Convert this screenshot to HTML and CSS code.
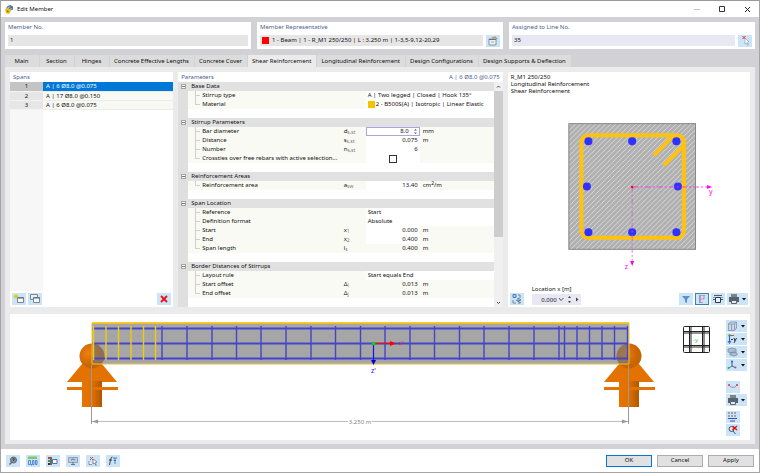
FILE: index.html
```html
<!DOCTYPE html>
<html lang="en">
<head>
    <meta charset="UTF-8">
    <meta name="viewport" content="width=device-width, initial-scale=1.0">
    <title>Edit Member</title>
    <link rel="stylesheet" href="styles.css">
</head>
<body>
    <header class="titlebar">
        <svg class="app-icon" viewBox="0 0 10 10"><path d="M1 4 3 1 6 0 9 2 9 5 6 6 4 4Z" fill="#526e8c"/><path d="M3 3 6 2M5 5 8 4" stroke="#b8d0e4"/><path d="M0 5 3 3 6 5 6 8 4 10 1 9Z" fill="#e8bd18"/><circle cx="3" cy="7" r="1" fill="#8a6b00"/></svg>
        <h1>Edit Member</h1>
        <div class="window-btns">
            <button aria-label="Minimize" disabled><svg viewBox="0 0 7 7"><path d="M0 3.5H6" stroke="#c4c4c4"/></svg></button>
            <button aria-label="Maximize"><svg viewBox="0 0 7 7"><path d="M.5.5H5.5V5.5H.5Z" fill="none" stroke="#333"/></svg></button>
            <button aria-label="Close"><svg viewBox="0 0 7 7"><path d="M1 1 6 6M6 1 1 6" stroke="#222"/></svg></button>
        </div>
    </header>

    <main class="dialog">
        <section class="head-fields">
            <div class="field-box">
                <label for="member-no">Member No.</label>
                <div class="field-row"><input id="member-no" value="1" readonly></div>
            </div>
            <div class="field-box">
                <label for="representative">Member Representative</label>
                <div class="field-row">
                    <div class="input-wrap"><i class="swatch red"></i><input id="representative" value="1 - Beam | 1 - R_M1 250/250 | L : 3.250 m | 1-3,5-9,12-20,29" readonly></div>
                    <button class="tool" aria-label="Edit representative"><svg viewBox="0 0 14 12"><path d="M3 4H10V10H3Z" fill="#eef2f5" stroke="#8994a0"/><path d="M3 4.500H10" stroke="#69747f"/><path d="M6 3 9 2 11 4" fill="none" stroke="#bd956c" stroke-width="1.5"/><path d="M5 7H8" stroke="#8994a0" stroke-width=".8"/></svg></button>
                </div>
            </div>
            <div class="field-box">
                <label for="line-no">Assigned to Line No.</label>
                <div class="field-row">
                    <input id="line-no" class="editable" value="35">
                    <button class="tool" aria-label="Select line"><svg viewBox="0 0 14 12"><path d="M4.500 1 7.500 4M7.500 1 4.500 4" stroke="#e83030"/><path d="M7 3V9L8.500 8 10 10.500 10.500 10 9.500 7.500 11 7Z" fill="#fff" stroke="#8a939b" stroke-width=".6"/></svg></button>
                </div>
            </div>
        </section>

        <nav class="tabs">
            <button>Main</button>
            <button>Section</button>
            <button>Hinges</button>
            <button>Concrete Effective Lengths</button>
            <button>Concrete Cover</button>
            <button class="active">Shear Reinforcement</button>
            <button>Longitudinal Reinforcement</button>
            <button>Design Configurations</button>
            <button>Design Supports &amp; Deflection</button>
        </nav>

        <div class="page">
            <div class="columns">
                <section class="panel spans">
                    <h2>Spans</h2>
                    <table class="span-list">
                        <tr class="selected"><th>1</th><td>A | 6 Ø8.0 @0.075</td></tr>
                        <tr><th>2</th><td>A | 17 Ø8.0 @0.150</td></tr>
                        <tr><th>3</th><td>A | 6 Ø8.0 @0.075</td></tr>
                    </table>
                    <div class="span-empty"></div>
                    <div class="toolbar">
                        <button class="tool" aria-label="New span"><svg viewBox="0 0 14 12"><path d="M5.500 4.500H11.500V9.500H5.500Z" fill="#f6f8fa" stroke="#7b8792"/><path d="M5 5H12" stroke="#5c6873"/><path d="M4 1V6M1.500 3.500H6.500M2 2 6 5M6 2 2 5" stroke="#d8c800" stroke-width=".8"/></svg></button>
                        <button class="tool" aria-label="Copy span"><svg viewBox="0 0 14 12"><path d="M2.500 1.500H9.500V6.500H2.500Z" fill="#e8eef3" stroke="#7b8792"/><path d="M5.500 4.500H11.500V9.500H5.500Z" fill="#f6f8fa" stroke="#7b8792"/><path d="M5 5H12" stroke="#5c6873"/></svg></button>
                        <span class="spacer"></span>
                        <button class="tool" aria-label="Delete span"><svg viewBox="0 0 14 12"><path d="M4 3 10 9M10 3 4 9" stroke="#f01010" stroke-width="1.800"/></svg></button>
                    </div>
                </section>

                <section class="panel params">
                    <h2>Parameters <span>A | 6 Ø8.0 @0.075</span></h2>
                    <div class="param-body">
                        <table class="param-table">
                            <colgroup><col class="c-gutter"><col class="c-name"><col class="c-symbol"><col class="c-value"><col class="c-unit"></colgroup>
                            <tr class="group"><td><i class="fold"></i></td><th colspan="4">Base Data</th></tr>
                            <tr><td></td><th>Stirrup type</th><td></td><td class="text" colspan="2">A | Two legged | Closed | Hook 135°</td></tr>
                            <tr class="last"><td></td><th>Material</th><td></td><td class="text" colspan="2"><i class="swatch yellow"></i>2 - B500S(A) | Isotropic | Linear Elastic</td></tr>
                            <tr class="blank"><td></td><td colspan="4"></td></tr>
                            <tr class="group"><td><i class="fold"></i></td><th colspan="4">Stirrup Parameters</th></tr>
                            <tr><td></td><th><label for="diameter">Bar diameter</label></th><td>d<sub>s,st</sub></td><td class="edit"><div class="spin"><input id="diameter" value="8.0"><svg viewBox="0 0 5 7"><path d="M1 2.500 2.500 1 4 2.500ZM1 4.500 2.500 6 4 4.500Z" fill="#555"/></svg></div></td><td>mm</td></tr>
                            <tr><td></td><th>Distance</th><td>s<sub>s,st</sub></td><td class="num">0.075</td><td>m</td></tr>
                            <tr><td></td><th>Number</th><td>n<sub>s,st</sub></td><td class="num">6</td><td></td></tr>
                            <tr class="last"><td></td><th><label for="crossties">Crossties over free rebars with active selection...</label></th><td></td><td class="check"><input type="checkbox" id="crossties"></td><td></td></tr>
                            <tr class="blank"><td></td><td colspan="4"></td></tr>
                            <tr class="group"><td><i class="fold"></i></td><th colspan="4">Reinforcement Areas</th></tr>
                            <tr class="last"><td></td><th>Reinforcement area</th><td>a<sub>sw</sub></td><td class="num">13.40</td><td>cm<sup>2</sup>/m</td></tr>
                            <tr class="blank"><td></td><td colspan="4"></td></tr>
                            <tr class="group"><td><i class="fold"></i></td><th colspan="4">Span Location</th></tr>
                            <tr><td></td><th>Reference</th><td></td><td class="text" colspan="2">Start</td></tr>
                            <tr><td></td><th>Definition format</th><td></td><td class="text" colspan="2">Absolute</td></tr>
                            <tr><td></td><th>Start</th><td>x<sub>1</sub></td><td class="num">0.000</td><td>m</td></tr>
                            <tr><td></td><th>End</th><td>x<sub>2</sub></td><td class="num">0.400</td><td>m</td></tr>
                            <tr class="last"><td></td><th>Span length</th><td>l<sub>s</sub></td><td class="num locked">0.400</td><td>m</td></tr>
                            <tr class="blank"><td></td><td colspan="4"></td></tr>
                            <tr class="group"><td><i class="fold"></i></td><th colspan="4">Border Distances of Stirrups</th></tr>
                            <tr><td></td><th>Layout rule</th><td></td><td class="text" colspan="2">Start equals End</td></tr>
                            <tr><td></td><th>Start offset</th><td>Δ<sub>i</sub></td><td class="num locked">0.013</td><td>m</td></tr>
                            <tr class="last"><td></td><th>End offset</th><td>Δ<sub>j</sub></td><td class="num locked">0.013</td><td>m</td></tr>
                            <tr class="blank"><td></td><td colspan="4"></td></tr>
                        </table>
                        <div class="scrollbar">
                            <svg viewBox="0 0 9 9"><path d="M3 5.500 4.500 4 6 5.500" fill="none" stroke="#444"/></svg>
                            <i class="thumb"></i>
                            <svg viewBox="0 0 9 9"><path d="M3 4 4.500 5.500 6 4" fill="none" stroke="#444"/></svg>
                        </div>
                    </div>
                </section>

                <section class="panel preview">
                    <p>R_M1 250/250<br>Longitudinal Reinforcement<br>Shear Reinforcement</p>
                    <svg class="section-view" viewBox="508 98 241 185">
                        <defs>
                            <pattern id="hatch" width="5" height="5" patternUnits="userSpaceOnUse"><path d="M-1 1 1-1M0 5 5 0M4 6 6 4" stroke="#e2e2e2" stroke-width=".8"/></pattern>
                        </defs>
                        <rect x="568.500" y="124.500" width="126" height="125" fill="#b0b0b0"/>
                        <rect x="568.500" y="124.500" width="126" height="125" fill="url(#hatch)" stroke="#888"/>
                        <rect x="581" y="136" width="102" height="102" rx="7" fill="none" stroke="#ffc20e" stroke-width="4"/>
                        <path d="M671 138 653 156M682 147 663 166" stroke="#ffc20e" stroke-width="4"/>
                        <g fill="#3030ff">
                            <circle cx="588" cy="142" r="4"/><circle cx="631.500" cy="142" r="4"/><circle cx="675.500" cy="142" r="4"/>
                            <circle cx="586.500" cy="187" r="4"/><circle cx="677" cy="187" r="4"/>
                            <circle cx="588" cy="232.500" r="4"/><circle cx="631.500" cy="232.500" r="4"/><circle cx="675.500" cy="232.500" r="4"/>
                        </g>
                        <path d="M632 187.500H706" stroke="#f030f0" stroke-width=".8" stroke-dasharray="6 2 2 2"/>
                        <path d="M631.500 187V262" stroke="#d060d0" stroke-width=".8" stroke-dasharray="6 2 2 2"/>
                        <path d="M706 185.500 711 187.500 706 189.500ZM629.500 261 633.500 261 631.500 266Z" fill="#f0f"/>
                        <circle cx="631.500" cy="187.500" r="1.200" fill="#f00"/>
                        <text x="708" y="194" class="axis-label">y</text>
                        <text x="624" y="269" class="axis-label">z</text>
                    </svg>
                    <div class="toolbar">
                        <button class="tool" aria-label="Section values"><svg viewBox="0 0 14 12"><path d="M3 1.500H6V4.500H3Z" fill="#9cc4f5" stroke="#4d7fc0"/><path d="M8 2H10V5M3 7V10H6" fill="none" stroke="#6f8ba7"/><path d="M8 5 11 7 8 8ZM6 7 11 10M9 9V11" fill="none" stroke="#687a8b"/></svg></button>
                        <div class="location">
                            <label for="location">Location x [m]</label>
                            <div class="location-row"><input id="location" value="0.000"><svg viewBox="0 0 24 11"><path d="M2 4 4 6.500 6.500 4" fill="none" stroke="#555"/><path d="M11 4 12.500 2 14 4ZM11 7 12.500 9 14 7ZM19 3.500 21.500 5.500 19 7.500Z" fill="#444"/></svg></div>
                        </div>
                        <span class="spacer"></span>
                        <button class="tool" aria-label="Filter"><svg viewBox="0 0 14 12"><path d="M3 3H11L8 6.500V10L6 9V6.500Z" fill="#5f8fc8"/></svg></button>
                        <button class="tool pressed" aria-label="Stresses"><svg viewBox="0 0 14 12"><path d="M5.500 2V10M5.500 2.500H10M5.500 6H9M5.500 9.500H8" stroke="#d07ba6" stroke-width=".8" fill="none"/><path d="M4.500 2V10M9 2.500V6" stroke="#7185a8" stroke-width=".7"/></svg></button>
                        <button class="tool" aria-label="Dimensions"><svg viewBox="0 0 14 12"><path d="M4.500 4.500H9.500V9.500H4.500Z" fill="#e8f2fa" stroke="#303840"/><path d="M3 2.500H11M3 4V5M11 4V5M2 6.500H4M10 6.500H12" stroke="#303840" stroke-width=".8"/></svg></button>
                        <button class="tool wide" aria-label="Print"><svg viewBox="0 0 21 12"><use href="#printer"/><use href="#drop"/></svg></button>
                    </div>
                </section>
            </div>

            <section class="panel model">
                <svg class="beam-view" viewBox="11 314 711 126">
                    <defs>
                        <linearGradient id="steel"><stop offset="0" stop-color="#e87400"/><stop offset=".5" stop-color="#e07000"/><stop offset="1" stop-color="#b05600"/></linearGradient>
                        <radialGradient id="ball" cx=".35" cy=".4"><stop offset="0" stop-color="#f08010"/><stop offset="1" stop-color="#c86400"/></radialGradient>
                        <g id="support">
                            <path d="M-10 8H10L25 26H-25Z" fill="#e37200"/>
                            <rect x="-10" y="25" width="20" height="26" fill="url(#steel)"/>
                            <rect x="-25" y="31" width="51" height="3" fill="#e37200"/>
                            <circle r="12.500" fill="url(#ball)"/>
                        </g>
                        <g id="printer"><path d="M4 1H10V4H4Z" fill="#7b858d"/><path d="M2 4H12V9H2Z" fill="#59636b"/><path d="M4.500 7.500H9.500V10.500H4.500Z" fill="#e6eaee" stroke="#59636b"/></g>
                        <path id="drop" d="M15 5H19L17 7.500Z" fill="#111"/>
                    </defs>
                    <use href="#support" x="93" y="356"/>
                    <use href="#support" x="630" y="356"/>
                    <rect x="93" y="323" width="537" height="41" fill="#767676" fill-opacity=".65"/>
                    <path d="M93 328.500H629M93 343.500H629M93 358.500H629" stroke="#4545cc" stroke-width="2.200"/>
                    <path d="M163 326V360M188 326V360M213 326V360M237.500 326V360M262 326V360M287 326V360M312 326V360M336.500 326V360M361.500 326V360M386 326V360M411 326V360M435.500 326V360M460.500 326V360M485 326V360M510 326V360M535 326V360M560 326V360M565.500 326V360M578 326V360M590.500 326V360M603 326V360M615.500 326V360M628.500 326V360" stroke="#4545c8" stroke-width="1.400"/>
                    <path d="M94.500 326V360M107 326V360M119.500 326V360M132 326V360M144.500 326V360M156.500 326V360" stroke="#f0cc10" stroke-width="1.400"/>
                    <path d="M93 323H630M93 323V364H630V323" fill="none" stroke="#ecbf40"/>
                    <path d="M93 323H630" stroke="#ffc20e" stroke-width="1.500"/>
                    <path d="M92.500 365V424M629.500 365V424" stroke="#999"/>
                    <path d="M93 421.500H349M373 421.500H629" stroke="#bbb"/>
                    <path d="M93 421.500 99 419.500V423.500ZM629 421.500 623 419.500V423.500Z" fill="#999"/>
                    <text x="361" y="424" text-anchor="middle" class="dimension">3.250 m</text>
                    <path d="M375 343.500H392" stroke="#e81010" stroke-width="1.200"/><path d="M391 341 397 343.500 391 346Z" fill="#f00"/>
                    <path d="M374.500 344V360" stroke="#1010f0" stroke-width="1.200"/><path d="M372 360H377L374.500 365Z" fill="#0000c8"/>
                    <circle cx="374.500" cy="343.500" r="1.800" fill="#0d0"/>
                    <text x="400" y="345" class="x-label">x'</text>
                    <text x="372" y="373" class="z-label">z'</text>
                    <g fill="none" stroke="#222">
                        <rect x="684.500" y="326.500" width="26" height="26" rx="1"/>
                        <path d="M690.500 326V353M692 326V353M703.500 326V353M705 326V353M684 331.500H711M684 333H711M684 345.500H711M684 347H711"/>
                    </g>
                    <text x="694" y="342" class="cube-label">-y</text>
                </svg>
                <div class="view-tools">
                    <button class="tool wide" aria-label="View"><svg viewBox="0 0 21 12"><path d="M2.500 3.500 5 2H10.500V8L8.500 10.500H2.500ZM2.500 4H8.500V10M8.500 4 10.500 2M5.500 4V10" fill="#cbd9e7" stroke="#8390ad" stroke-width=".8"/><use href="#drop"/></svg></button>
                    <button class="tool wide" aria-label="Axis view"><svg viewBox="0 0 21 12"><path d="M3.500 2V9M2 8 3.500 10.500 5 8" stroke="#3556cc" fill="none"/><path d="M3 2.500H8" stroke="#e04545"/><circle cx="3.500" cy="2.500" r="1.200" fill="#2aa84a"/><path d="M5 6.500H7M8 5 9 8 10.500 5M9 8 8 10" fill="none" stroke="#222" stroke-width=".9"/><use href="#drop"/></svg></button>
                    <button class="tool wide" aria-label="Display"><svg viewBox="0 0 21 12"><path d="M2 3 6 2 10 3V6L6 7 2 6ZM4 7 8 6 11 7V9L8 10 4 9Z" fill="#a9bdd0" stroke="#7890a8" stroke-width=".8"/><use href="#drop"/></svg></button>
                    <button class="tool wide" aria-label="Axes"><svg viewBox="0 0 21 12"><path d="M6 7V3" stroke="#3556cc"/><path d="M6 7 3 9" stroke="#2aa84a"/><path d="M6 7 9 8.500" stroke="#3556cc"/><circle cx="6" cy="2.500" r="1" fill="#3556cc"/><circle cx="2.500" cy="9" r="1" fill="#2aa84a"/><circle cx="9.500" cy="8.500" r="1" fill="#e04545"/><use href="#drop"/></svg></button>
                    <button class="tool gap" aria-label="Deformation"><svg viewBox="0 0 14 12"><path d="M3 4Q7 9 11 4" fill="none" stroke="#8c98b0"/><circle cx="3" cy="4" r="1" fill="#f03030"/><circle cx="11" cy="4" r="1" fill="#f03030"/></svg></button>
                    <button class="tool wide" aria-label="Print model"><svg viewBox="0 0 21 12"><use href="#printer"/><use href="#drop"/></svg></button>
                    <button class="tool gap-small" aria-label="Result values"><svg viewBox="0 0 14 12"><path d="M2 2H11M2 5H11" stroke="#8d8f98" stroke-dasharray="2 1" stroke-width="1.500"/><path d="M2 7.500H11M4 10H9" stroke="#3b4fae"/></svg></button>
                    <button class="tool" aria-label="Reset zoom"><svg viewBox="0 0 14 12"><circle cx="5.500" cy="5" r="2.500" fill="none" stroke="#555"/><path d="M7 7 9.500 10" stroke="#555"/><path d="M6.500 2 11 6M11 2 6.500 6" stroke="#e81010" stroke-width="1.400"/></svg></button>
                </div>
            </section>
        </div>
    </main>

    <footer class="bottom">
        <div class="bottom-tools">
            <button class="tool" aria-label="Help"><svg viewBox="0 0 14 12"><circle cx="7.500" cy="5" r="3" fill="#89949d" stroke="#5d6973"/><path d="M6 7 3.500 9.500" stroke="#5d6973" stroke-width="1.500"/><path d="M6.500 4Q7.500 3 8.500 4L7.500 5V6" fill="none" stroke="#222" stroke-width=".8"/></svg></button>
            <button class="tool" aria-label="Units"><svg viewBox="0 0 14 12"><path d="M2 1.500H11V4H2Z" fill="#7cc86c"/><path d="M2.500 5.500H4.500V9.500H2.500ZM6.500 5.500H8V9.500H6.500ZM9.500 5.500H11V9.500H9.500ZM5.500 9V10.500" fill="none" stroke="#3b72c8" stroke-width=".8"/></svg></button>
            <button class="tool" aria-label="Colors"><svg viewBox="0 0 14 12"><path d="M2 2H4V4H2Z" fill="#e03030"/><path d="M2 5H4V7H2Z" fill="#30a030"/><path d="M2 8H4V10H2Z" fill="#333"/><path d="M5 2V10" stroke="#444" stroke-width="1.500"/><path d="M6.500 4.500H11V8.500H6.500Z" fill="#fff" stroke="#5475ac"/></svg></button>
            <button class="tool" aria-label="Display settings"><svg viewBox="0 0 14 12"><path d="M2.500 2.500H11.500V7.500H2.500Z" fill="#bccede" stroke="#8fa1b4"/><path d="M5 9.500H9M7 7V9.500M5 5Q7 3 9 5" fill="none" stroke="#566d86" stroke-width=".9"/></svg></button>
            <button class="tool" aria-label="Pick"><svg viewBox="0 0 14 12"><path d="M4 2 7 5M7 2 4 5" stroke="#d44"/><path d="M3 6V9.500H6M7 4V9L8.500 8 10 10.500 9.500 7.500 11 7Z" fill="#fff" stroke="#707b85" stroke-width=".8"/></svg></button>
            <button class="tool" aria-label="Formula"><svg viewBox="0 0 14 12"><path d="M6.500 2Q5 1.500 4.500 5L3.500 10M3 5H6" fill="none" stroke="#333" stroke-width=".9"/><path d="M7 3H11M9 3V9M7.500 5.500H10" stroke="#4470b8" stroke-width=".9"/></svg></button>
        </div>
        <div class="actions">
            <button class="primary">OK</button>
            <button>Cancel</button>
            <button>Apply</button>
        </div>
    </footer>
</body>
</html>
```
FILE: styles.css
```css
* {
    box-sizing: border-box;
}
body {
    margin: 0;
    min-height: 100vh;
    display: flex;
    flex-direction: column;
    border: 1px solid #a5a5a8;
    border-top-color: #9a9a9a;
    background-color: #fff;
    color: #111;
    font-family: "Noto Sans", "Open Sans", sans-serif;
    font-size: 6px;
    line-height: 9px;
}
h1, h2, p {
    margin: 0;
    font-size: inherit;
    font-weight: normal;
}
button, input {
    margin: 0;
    padding: 0;
    border: none;
    border-radius: 0;
    color: inherit;
    font: inherit;
}
svg {
    display: block;
}
table {
    border-collapse: collapse;
}
th {
    font-weight: normal;
    text-align: left;
}
th, td {
    padding: 0;
}

/* title bar */
.titlebar {
    display: flex;
    align-items: center;
    height: 16px;
    padding: 0 8px 0 4px;
    gap: 3px;
}
.app-icon {
    width: 9px;
    height: 9px;
}
.window-btns {
    display: flex;
    gap: 18px;
    margin-left: auto;
}
.window-btns button {
    width: 7px;
    height: 7px;
    background: none;
}

/* dialog */
.dialog {
    flex: 1;
    display: flex;
    flex-direction: column;
    padding: 5px 4px;
    background-color: #d1d1d6;
}
.head-fields {
    display: grid;
    grid-template-columns: repeat(3, 1fr);
    gap: 6px;
}
.field-box {
    height: 27px;
    padding: 1px 3px 3px;
    background-color: #fff;
}
.field-box label, h2 {
    color: #4a5f8a;
}
.field-box label {
    display: block;
    line-height: 9px;
    margin-bottom: 3px;
}
.field-row {
    display: flex;
    gap: 3px;
    height: 11px;
}
.field-row input {
    flex: 1;
    min-width: 0;
    padding-left: 2px;
    background-color: #e6e6e6;
}
.field-row .editable {
    background-color: #e8e8f3;
}
.input-wrap {
    flex: 1;
    display: flex;
    align-items: center;
    padding-left: 2px;
    background-color: #e6e6e6;
}
.swatch {
    display: inline-block;
    width: 7px;
    height: 7px;
    margin-right: 1px;
    vertical-align: middle;
}
.red {
    background-color: #f00;
}
.yellow {
    background-color: #f5c400;
}
.tool {
    flex: none;
    width: 14px;
    height: 12px;
    background-color: #cce4f7;
}
.tool.wide {
    width: 21px;
}
.tool.pressed {
    outline: 1px solid #3c7fb1;
    outline-offset: -1px;
}
.tool svg {
    width: 100%;
    height: 100%;
}

/* tabs */
.tabs {
    display: flex;
    margin-top: 6px;
}
.tabs button {
    min-width: 35px;
    height: 12px;
    padding: 0 5px 0 4px;
    border-right: 1px solid #d2d2d2;
    background-color: #dcdcdc;
}
.tabs .active {
    background-color: #ebebeb;
}
.page {
    flex: 1;
    display: flex;
    flex-direction: column;
    gap: 7px;
    padding: 5px 5px 4px;
    background-color: #ebebeb;
}
.columns {
    display: grid;
    grid-template-columns: 163fr 324fr 242fr;
    gap: 5px;
}
.panel {
    background-color: #fff;
}
.panel h2 {
    display: flex;
    justify-content: space-between;
    padding: 0 3px;
    line-height: 10px;
}
.toolbar {
    display: flex;
    align-items: flex-end;
    gap: 2px;
    padding: 2px;
}
.spacer {
    flex: 1;
}

/* spans */
.spans {
    display: flex;
    flex-direction: column;
}
.span-list {
    width: 100%;
}
.span-list tr {
    height: 9px;
}
.span-list th {
    width: 33px;
    background-color: #e6e6e6;
    text-align: center;
    border-bottom: 1px solid #f3f3f3;
    line-height: 8px;
}
.span-list td {
    padding-left: 3px;
    background-color: #f8f9f3;
    border-bottom: 1px solid #ececec;
    line-height: 8px;
}
.span-list .selected th {
    background-color: #c4c4c4;
}
.span-list .selected td {
    background-color: #0078d7;
    color: #fff;
}
.span-empty {
    flex: 1;
    width: 33px;
    background-color: #f7f7f7;
}

/* parameters */
.param-body {
    display: flex;
}
.param-table {
    flex: 1;
    table-layout: fixed;
    width: 100%;
}
.c-gutter {
    width: 10px;
}
.c-symbol {
    width: 25px;
}
.c-value {
    width: 54px;
}
.c-unit {
    width: 74px;
}
.param-table tr {
    height: 9px;
    line-height: 9px;
    background-color: #f9faf4;
    white-space: nowrap;
}
.param-table td:first-child {
    background-color: #dfdfdf;
}
.param-table td {
    padding-left: 3px;
}
.param-table th {
    padding-left: 14px;
    background-image: linear-gradient(#d0d0d0, #d0d0d0), linear-gradient(#d0d0d0, #d0d0d0);
    background-repeat: no-repeat;
    background-size: 1px 9px, 5px 1px;
    background-position: 7px 0, 7px 4px;
}
.param-table .last th {
    background-size: 1px 5px, 5px 1px;
}
.param-table .group, .param-table .group th {
    background: #e1e1e1;
}
.param-table .group th {
    padding-left: 3px;
}
.param-table .blank {
    background-color: #fff;
}
.fold {
    display: block;
    width: 5px;
    height: 5px;
    border: 1px solid #a4a4a4;
    background: linear-gradient(#777, #777) center / 3px 1px no-repeat #fff;
}
.param-table .text, .param-table .num, .param-table .edit, .param-table .check {
    background-color: #fff;
}
.param-table .text {
    padding-left: 2px;
}
.param-table .num {
    padding-right: 2px;
    text-align: right;
}
.param-table .locked {
    background-color: #f9faf4;
}
.param-table .edit {
    padding: 0;
}
.spin {
    display: flex;
    align-items: center;
    height: 9px;
    border: 1px solid #aaa5e0;
}
.spin input {
    flex: 1;
    min-width: 0;
    height: 7px;
    padding-right: 4px;
    background: none;
    line-height: 7px;
    text-align: right;
}
.spin svg {
    width: 5px;
    height: 7px;
    margin-right: 1px;
}
.param-table .check {
    padding: 0;
    text-align: center;
}
.check input {
    appearance: none;
    display: block;
    width: 8px;
    height: 8px;
    margin: 0 auto;
    border: 1px solid #333;
}
sub, sup {
    font-size: 5px;
    line-height: 0;
}
sub {
    color: #777;
    vertical-align: -1px;
}
sup {
    vertical-align: 2px;
}
.scrollbar {
    display: flex;
    flex-direction: column;
    width: 9px;
    background-color: #f0f0f0;
}
.scrollbar svg {
    width: 9px;
    height: 9px;
}
.thumb {
    flex: 0 0 65%;
    margin-bottom: auto;
    background-color: #cdcdcd;
}

/* section preview */
.preview {
    display: flex;
    flex-direction: column;
}
.preview p {
    padding: 2px 3px;
    line-height: 7px;
}
.section-view {
    flex: 1;
    width: 100%;
    min-height: 0;
}
.location {
    margin-left: 6px;
}
.location label {
    display: block;
}
.location-row {
    display: flex;
    background-color: #e8e8f3;
}
.location-row input {
    width: 25px;
    height: 11px;
    background: none;
    text-align: right;
}
.location-row svg {
    width: 24px;
    height: 11px;
}
.axis-label {
    fill: #f0f;
    font-size: 7px;
}

/* beam */
.model {
    flex: 1;
    display: flex;
    gap: 5px;
    padding-right: 3px;
}
.beam-view {
    flex: 1;
    min-width: 0;
    width: 100%;
}
.view-tools {
    display: flex;
    flex-direction: column;
    gap: 1px;
    width: 21px;
    padding-top: 6px;
}
.view-tools .gap {
    margin-top: 9px;
}
.view-tools .gap-small {
    margin-top: 4px;
}
.dimension {
    fill: #888;
    font-size: 6px;
}
.x-label {
    fill: #e02020;
    font-size: 6px;
}
.z-label {
    fill: #2020ff;
    font-size: 7px;
}
.cube-label {
    fill: #50c050;
    font-size: 6px;
}

/* bottom bar */
.bottom {
    display: flex;
    justify-content: space-between;
    align-items: center;
    height: 23px;
    padding: 0 5px;
}
.bottom-tools {
    display: flex;
    gap: 6px;
}
.actions {
    display: flex;
    gap: 5px;
}
.actions button {
    width: 46px;
    height: 12px;
    border: 1px solid #adadad;
    background-color: #e1e1e1;
}
.actions .primary {
    border-color: #0078d7;
}
```
